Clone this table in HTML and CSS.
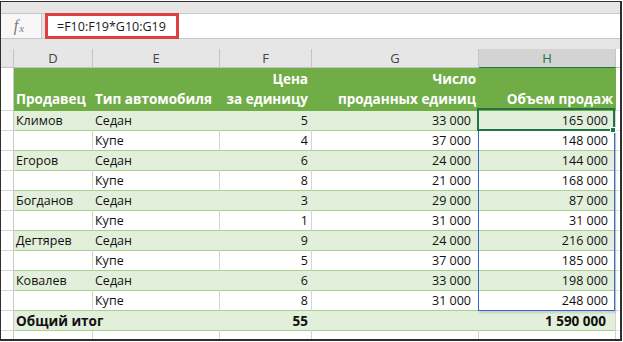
FILE: index.html
```html
<!DOCTYPE html>
<html lang="ru">
<head>
<meta charset="utf-8">
<link rel="stylesheet" href="styles.css">
</head>
<body>
<div class="frame">
  <div class="topstrip"></div>
  <div class="fbar">
    <div class="fx"><span class="fx-f">f</span><span class="fx-x">x</span></div>
    <div class="finput"><div class="formula">=F10:F19*G10:G19</div></div>
  </div>
  <div class="strip"></div>
  <div class="sheet">
    <div class="row colhdr">
      <div class="c rh"></div>
      <div class="c">D</div>
      <div class="c">E</div>
      <div class="c">F</div>
      <div class="c">G</div>
      <div class="c selcol">H</div>
      <div class="c rest"></div>
    </div>
    <div class="row thead">
      <div class="c rh"></div>
      <div class="c l"><span>Продавец</span></div>
      <div class="c l"><span>Тип автомобиля</span></div>
      <div class="c r pf"><span>Цена<br>за единицу</span></div>
      <div class="c r ph"><span>Число<br>проданных единиц</span></div>
      <div class="c r ph"><span>Объем продаж</span></div>
      <div class="c rest"></div>
    </div>
    <div class="row band"><div class="c rh"></div><div class="c l">Климов</div><div class="c l">Седан</div><div class="c r pf">5</div><div class="c r pg">33 000</div><div class="c r pg">165 000</div><div class="c rest"></div></div>
    <div class="row"><div class="c rh"></div><div class="c l"></div><div class="c l">Купе</div><div class="c r pf">4</div><div class="c r pg">37 000</div><div class="c r pg">148 000</div><div class="c rest"></div></div>
    <div class="row band"><div class="c rh"></div><div class="c l">Егоров</div><div class="c l">Седан</div><div class="c r pf">6</div><div class="c r pg">24 000</div><div class="c r pg">144 000</div><div class="c rest"></div></div>
    <div class="row"><div class="c rh"></div><div class="c l"></div><div class="c l">Купе</div><div class="c r pf">8</div><div class="c r pg">21 000</div><div class="c r pg">168 000</div><div class="c rest"></div></div>
    <div class="row band"><div class="c rh"></div><div class="c l">Богданов</div><div class="c l">Седан</div><div class="c r pf">3</div><div class="c r pg">29 000</div><div class="c r pg">87 000</div><div class="c rest"></div></div>
    <div class="row"><div class="c rh"></div><div class="c l"></div><div class="c l">Купе</div><div class="c r pf">1</div><div class="c r pg">31 000</div><div class="c r pg">31 000</div><div class="c rest"></div></div>
    <div class="row band"><div class="c rh"></div><div class="c l">Дегтярев</div><div class="c l">Седан</div><div class="c r pf">9</div><div class="c r pg">24 000</div><div class="c r pg">216 000</div><div class="c rest"></div></div>
    <div class="row"><div class="c rh"></div><div class="c l"></div><div class="c l">Купе</div><div class="c r pf">5</div><div class="c r pg">37 000</div><div class="c r pg">185 000</div><div class="c rest"></div></div>
    <div class="row band"><div class="c rh"></div><div class="c l">Ковалев</div><div class="c l">Седан</div><div class="c r pf">6</div><div class="c r pg">33 000</div><div class="c r pg">198 000</div><div class="c rest"></div></div>
    <div class="row"><div class="c rh"></div><div class="c l"></div><div class="c l">Купе</div><div class="c r pf">8</div><div class="c r pg">31 000</div><div class="c r pg">248 000</div><div class="c rest"></div></div>
    <div class="row band total"><div class="c rh"></div><div class="c l wide">Общий итог</div><div class="c r pf">55</div><div class="c r pg"></div><div class="c r pg">1 590 000</div><div class="c rest"></div></div>
    <div class="row last"><div class="c rh"></div><div class="c"></div><div class="c"></div><div class="c"></div><div class="c"></div><div class="c"></div><div class="c rest"></div></div>
    <div class="range"></div>
    <div class="active"></div>
    <div class="handle"></div>
  </div>
</div>
</body>
</html>
```
FILE: styles.css
```css
* { box-sizing: border-box; margin: 0; padding: 0; }
body {
  width: 623px; height: 342px; overflow: hidden; background: #fff;
  font-family: "Open Sans", "DejaVu Sans", sans-serif; color: #111;
}
.frame {
  margin-top: 1px; width: 622px; height: 340px;
  border: 1px solid #2e2e2e; border-right-width: 2px; border-bottom-width: 2px;
  background: #e6e6e6; display: flex; flex-direction: column; overflow: hidden;
}
.topstrip { height: 11px; }
.fbar {
  height: 26px; display: flex;
  border-top: 1px solid #c8c8c8; border-bottom: 1px solid #c8c8c8;
}
.fx {
  width: 41px; background: #f7f7f7; border-right: 1px solid #c8c8c8;
  display: flex; align-items: center; justify-content: center; padding-right: 4px;
  color: #7a7a7a; font-family: "Liberation Serif", serif; font-style: italic;
}
.fx-f { font-size: 16px; line-height: 16px; }
.fx-x { font-size: 11px; line-height: 11px; margin-top: 5px; margin-left: 1px; }
.finput { flex: 1; margin-left: 3px; background: #fff; }
.formula {
  width: 134px; height: 26px; margin-top: -1px;
  border: 3px solid #e23e3e; padding: 1px 0 0 9px;
  font-size: 12.5px; line-height: 19px; color: #1a1a1a; white-space: nowrap;
}
.strip { height: 10px; }
.sheet { position: relative; flex: 1; background: #fff; }
.row {
  display: grid;
  grid-template-columns: 13px 79px 127px 92px 167px 137px 4px;
  height: 20px;
}
.c {
  border-right: 1px solid #d4d4d4; border-bottom: 1px solid #a9d08e;
  font-size: 12.5px; line-height: 19px; white-space: nowrap; overflow: hidden;
}
.c.rh { background: #fff; border-right-color: #c8c8c8; border-bottom-color: #d4d4d4; }
.c.rest { border-right: none; border-bottom-color: #e2e2e2; }
.l { padding-left: 2px; }
.r { text-align: right; }
.pf { padding-right: 3px; }
.pg { padding-right: 7px; }
.ph { padding-right: 2px; }

.colhdr { height: 19px; }
.colhdr .c {
  background: #e6e6e6; border-right-color: #c4c4c4; border-bottom-color: #c4c4c4;
  text-align: center; font-size: 13px; line-height: 18px; color: #444;
}
.colhdr .c.rh { background: #e6e6e6; }
.colhdr .c.rest { background: #fff; border-bottom-color: #c4c4c4; }
.colhdr .selcol {
  background: #d3d3d3; color: #217346; border-bottom: 1px solid #217346;
}

.thead { height: 43px; }
.thead .c {
  background: #70ad47; border-right-color: #70ad47; border-bottom-color: #70ad47;
  color: #fff; font-weight: 700; font-size: 13.5px; line-height: 20px;
  padding-top: 2px; display: flex; align-items: flex-end; padding-bottom: 1px;
}
.thead .c.r { justify-content: flex-end; }
.thead .c span { display: block; }
.thead .c.rh { background: #fff; border-right-color: #c8c8c8; border-bottom-color: #d4d4d4; }
.thead .c.rest { background: #fff; border-bottom-color: #e2e2e2; border-right: none; }

.band .c { background: #e2efda; border-right-color: #e2efda; }
.band .c.rh { background: #fff; border-right-color: #c8c8c8; }
.band .c.rest { background: #fff; }
.band .c:nth-child(6) { border-right-color: #cfd9c8; }

.total .c { font-weight: 700; font-size: 13.5px; padding-top: 1px; line-height: 18px; }
.total .c.wide { grid-column: span 2; }
.total .c:nth-child(5) { padding-right: 9px; border-right-color: #cfd9c8; }

.last { height: 8px; }
.last .c { border-bottom: none; }

.range {
  position: absolute; left: 477px; top: 81px; width: 137px; height: 181px;
  border: 1px solid #3568cf;
  box-shadow: 1px 2px 2px rgba(0,0,0,0.12);
}
.active {
  position: absolute; left: 476px; top: 59px; width: 138px; height: 23px;
  border: 2px solid #217346;
}
.handle {
  position: absolute; left: 609px; top: 78px; width: 6px; height: 6px;
  background: #217346; border: 1px solid #fff;
}
```
